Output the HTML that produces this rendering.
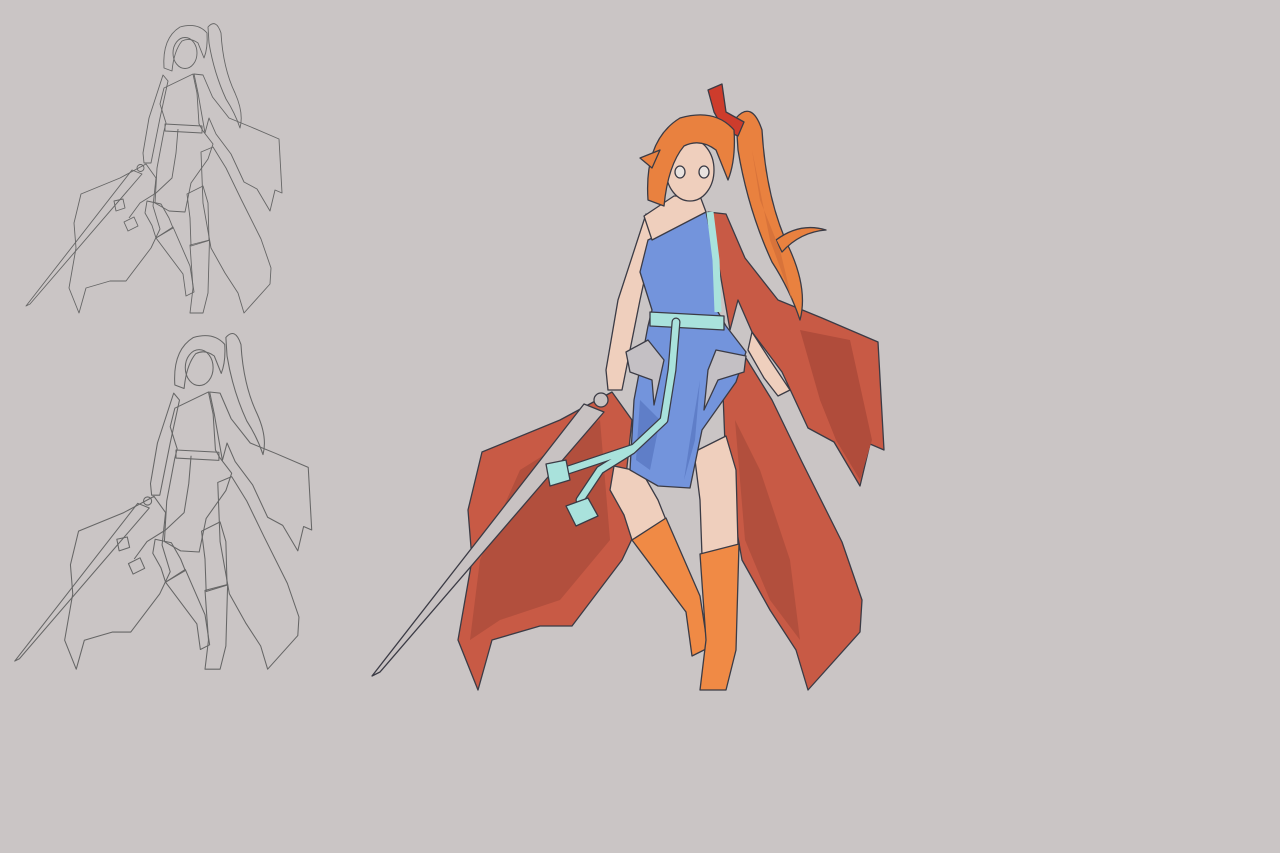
<!DOCTYPE html>
<html><head><meta charset="utf-8"><style>
html,body{margin:0;padding:0;background:#cac5c5;width:1280px;height:853px;overflow:hidden}
svg{display:block}
</style></head><body>
<svg width="1280" height="853" viewBox="0 0 1280 853" xmlns="http://www.w3.org/2000/svg">
<defs>
<g id="fig">
 <path d="M612,392 L560,420 L482,452 L468,510 L472,560 L458,640 L478,690 L492,640 L540,626 L572,626 L622,560 L640,522 L626,476 L632,420 Z"/>
 <path d="M722,368 L746,358 L772,400 L802,462 L842,542 L862,600 L860,632 L808,690 L796,650 L770,610 L742,560 L726,470 Z"/>
 <path d="M708,212 L726,214 L745,258 L778,300 L822,318 L878,342 L884,450 L870,444 L860,486 L834,442 L808,428 L782,372 L752,332 L738,300 L730,330 L716,250 Z"/>
 <path d="M584,404 L604,412 L380,672 L372,676 Z"/>
 <circle cx="601" cy="400" r="7"/>
 <path d="M614,466 L642,472 L658,500 L666,520 L632,540 L624,515 L610,490 Z"/>
 <path d="M694,452 L726,436 L736,470 L738,545 L702,556 L700,500 Z"/>
 <path d="M632,540 L666,518 L700,596 L708,648 L692,656 L686,612 Z"/>
 <path d="M700,554 L739,544 L736,650 L726,690 L700,690 L706,640 Z"/>
 <path d="M646,214 L656,226 L640,300 L626,370 L622,390 L608,390 L606,370 L618,300 Z"/>
 <path d="M648,240 L706,212 L714,250 L718,312 L726,326 L746,352 L736,382 L702,430 L690,488 L658,486 L630,470 L634,400 L648,326 L652,310 L640,272 Z"/>
 <path d="M650,312 L724,316 L724,330 L650,326 Z"/>
 <path d="M676,322 L672,370 L664,420 L632,450 L600,470 L578,500" fill="none"/>
 <path d="M548,466 L566,462 L570,480 L552,486 Z"/>
 <path d="M568,508 L588,498 L596,516 L576,526 Z"/>
 <path d="M736,118 Q752,100 762,130 Q766,200 790,250 Q808,290 800,320 Q790,290 772,262 Q748,210 738,150 Z"/>
 <ellipse cx="690" cy="170" rx="24" ry="31"/>
 <path d="M648,200 Q644,140 680,118 Q715,108 734,130 Q736,160 728,180 L716,150 Q700,138 684,146 Q668,165 664,206 Z"/>
</g>
</defs>

<g fill="none" stroke="#666" stroke-width="1.8" stroke-linejoin="round">
 <use href="#fig" transform="translate(-160,-32) scale(0.5)"/>
 <use href="#fig" transform="translate(-201,269) scale(0.58)"/>
</g>

<g stroke="#3b3b45" stroke-width="1.3" stroke-linejoin="round">
 <path fill="#c85a45" d="M612,392 L560,420 L482,452 L468,510 L472,560 L458,640 L478,690 L492,640 L540,626 L572,626 L622,560 L640,522 L626,476 L632,420 Z"/>
 <path fill="#b24f3d" stroke="none" d="M600,420 L520,470 L480,560 L470,640 L500,620 L560,600 L610,540 Z"/>
 <path fill="#c85a45" d="M722,368 L746,358 L772,400 L802,462 L842,542 L862,600 L860,632 L808,690 L796,650 L770,610 L742,560 L726,470 Z"/>
 <path fill="#b24f3d" stroke="none" d="M735,420 L760,470 L790,560 L800,640 L770,600 L745,540 Z"/>
 <path fill="#c85a45" d="M708,212 L726,214 L745,258 L778,300 L822,318 L878,342 L884,450 L870,444 L860,486 L834,442 L808,428 L782,372 L752,332 L738,300 L730,330 L716,250 Z"/>
 <path fill="#b04c3b" stroke="none" d="M800,330 L850,340 L872,440 L860,480 L836,440 L820,400 Z"/>
 <path fill="#c8c2c2" d="M584,404 L604,412 L380,672 L372,676 Z"/>
 <circle cx="601" cy="400" r="7" fill="#c8c2c2"/>
 <path fill="#efcfbd" d="M614,466 L642,472 L658,500 L666,520 L632,540 L624,515 L610,490 Z"/>
 <path fill="#efcfbd" d="M694,452 L726,436 L736,470 L738,545 L702,556 L700,500 Z"/>
 <path fill="#f08a45" d="M632,540 L666,518 L700,596 L708,648 L692,656 L686,612 Z"/>
 <path fill="#f08a45" d="M700,554 L739,544 L736,650 L726,690 L700,690 L706,640 Z"/>
 <path fill="#efcfbd" d="M646,214 L656,226 L640,300 L626,370 L622,390 L608,390 L606,370 L618,300 Z"/>
 <path fill="#efcfbd" d="M752,332 L770,360 L790,390 L778,396 L764,378 L748,350 Z"/>
 <path fill="#7394dc" d="M648,240 L706,212 L714,250 L718,312 L726,326 L746,352 L736,382 L702,430 L690,488 L658,486 L630,470 L634,400 L648,326 L652,310 L640,272 Z"/>
 <path fill="#5f7ec8" stroke="none" d="M640,400 L660,420 L650,470 L636,460 Z M700,380 L690,440 L684,480 L695,440 Z"/>
 <path fill="#efcfbd" d="M674,196 L700,196 L706,212 L652,240 L644,216 Z"/>
 <path fill="none" stroke="#a9e2dc" stroke-width="7" d="M710,212 L716,260 L718,312"/>
 <path fill="#a9e2dc" d="M650,312 L724,316 L724,330 L650,326 Z"/>
 <path fill="none" stroke="#3b3b45" stroke-width="9" stroke-linecap="round" d="M676,322 L672,370 L664,420 L632,450 L600,470 L580,500 M634,448 L562,472"/>
 <path fill="none" stroke="#a9e2dc" stroke-width="6.5" stroke-linecap="round" d="M676,322 L672,370 L664,420 L632,450 L600,470 L580,500 M634,448 L562,472"/>
 <path fill="#a9e2dc" d="M546,464 L566,460 L570,480 L550,486 Z"/>
 <path fill="#a9e2dc" d="M566,506 L588,498 L598,516 L576,526 Z"/>
 <path fill="#c4c0c4" d="M648,340 L626,352 L630,372 L652,380 L654,405 L664,360 Z"/>
 <path fill="#c4c0c4" d="M716,350 L746,356 L744,372 L718,380 L704,410 L708,370 Z"/>
 <path fill="#e9813f" d="M736,118 Q752,100 762,130 Q766,200 790,250 Q808,290 800,320 Q790,290 772,262 Q748,210 738,150 Z"/>
 <path fill="#e9813f" d="M776,240 Q800,222 826,230 Q800,232 782,252 Z"/>
 <path fill="#d8733a" stroke="none" d="M752,150 L760,200 L780,250 L792,300 L770,240 Z"/>
 <path fill="#cd3c2c" d="M708,90 L722,84 L726,112 L744,122 L738,136 L724,130 L714,112 Z"/>
 <ellipse cx="690" cy="170" rx="24" ry="31" fill="#efcfbd"/>
 <path fill="#e9813f" d="M648,200 Q644,140 680,118 Q715,108 734,130 Q736,160 728,180 L716,150 Q700,138 684,146 Q668,165 664,206 Z"/>
 <path fill="#e9813f" d="M640,158 L660,150 L652,168 Z"/>
 <ellipse cx="680" cy="172" rx="5" ry="6" fill="#e8e2df"/>
 <ellipse cx="704" cy="172" rx="5" ry="6" fill="#e8e2df"/>
</g>
</svg>
</body></html>
